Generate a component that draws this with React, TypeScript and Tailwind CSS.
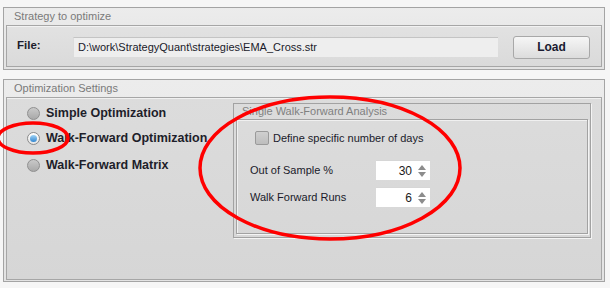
import React from "react";

function Radio({ checked }: { checked?: boolean }) {
  if (checked) {
    return (
      <div className="w-[13px] h-[13px] rounded-full border border-[#8a8a8a] bg-gradient-to-b from-[#ffffff] to-[#e4e4e4] flex items-center justify-center shrink-0">
        <div className="w-[7px] h-[7px] rounded-full bg-gradient-to-b from-[#9fd3f5] to-[#2f86cf]" />
      </div>
    );
  }
  return (
    <div className="w-[13px] h-[13px] rounded-full border border-[#8f8f8f] bg-gradient-to-b from-[#c9c9c9] to-[#a9a9a9] shrink-0" />
  );
}

function Spin({ value }: { value: string }) {
  return (
    <div className="w-[54px] h-[20px] bg-white border-t border-[#d6d6d6] flex items-center">
      <div className="flex-1 text-right pr-[4px] text-[12px] text-[#1a1a1a] leading-none">{value}</div>
      <svg width="12" height="14" viewBox="0 0 12 14" className="mr-[2px]">
        <path d="M6 1 L10 6 L2 6 Z" fill="#8c8c8c" />
        <path d="M2 8 L10 8 L6 13 Z" fill="#8c8c8c" />
      </svg>
    </div>
  );
}

export default function App() {
  return (
    <div className="relative w-[610px] h-[288px] overflow-hidden bg-[#f6f6f6] pt-[7px] pl-[3px] font-['Liberation_Sans',Arial,sans-serif]">
      {/* Panel 1 */}
      <div className="w-[602px] h-[63px] border border-[#a4a4a4] bg-gradient-to-b from-[#ececec] to-[#e3e3e3] flex flex-col px-[2px] pb-[2px]">
        <div className="h-[17px] pl-[8px] text-[11px] leading-[17px] text-[#7a7a7a]">Strategy to optimize</div>
        <div className="h-[42px] border border-[#a6a6a6] shadow-[inset_0_1px_0_#f2f2f2] bg-gradient-to-b from-[#e2e2e2] to-[#dadada] flex items-center">
          <div className="w-[66px] pl-[10px] text-[11.5px] font-bold text-[#1c1c2c]">File:</div>
          <div className="w-[425px] h-[20px] bg-[#eeeeee] border-t border-[#c4c4c4] border-l border-l-[#dcdcdc] flex items-center pl-[4px] text-[11px] text-[#1a1a2a] mt-[1px]">
            D:\work\StrategyQuant\strategies\EMA_Cross.str
          </div>
          <div className="ml-[15px] w-[77px] h-[23px] rounded-[3px] border border-[#a8a8a8] bg-gradient-to-b from-[#f6f6f6] to-[#dcdcdc] flex items-center justify-center text-[12px] font-bold text-[#1a1a30] mt-[2px]">
            Load
          </div>
        </div>
      </div>

      {/* Panel 2 */}
      <div className="mt-[9px] w-[602px] h-[203px] border border-[#a4a4a4] bg-gradient-to-b from-[#ececec] to-[#e3e3e3] flex flex-col px-[2px] pb-[1px]">
        <div className="h-[17px] pl-[8px] text-[11px] leading-[17px] text-[#7a7a7a]">Optimization Settings</div>
        <div className="h-[183px] border border-[#a6a6a6] shadow-[inset_0_1px_0_#f0f0f0] bg-gradient-to-b from-[#dcdcdc] to-[#d6d6d6] flex">
          {/* radios */}
          <div className="w-[226px] pl-[20px] pt-[9px] flex flex-col">
            <div className="h-[13px] flex items-center gap-[6px]">
              <Radio />
              <span className="text-[12.5px] font-bold text-[#1e1e2a] whitespace-nowrap">Simple Optimization</span>
            </div>
            <div className="mt-[12px] h-[13px] flex items-center gap-[6px]">
              <Radio checked />
              <span className="text-[12.5px] font-bold text-[#1e1e2a] whitespace-nowrap">Walk-Forward Optimization</span>
            </div>
            <div className="mt-[14px] h-[13px] flex items-center gap-[6px]">
              <Radio />
              <span className="text-[12.5px] font-bold text-[#1e1e2a] whitespace-nowrap">Walk-Forward Matrix</span>
            </div>
          </div>
          {/* group box */}
          <div className="mt-[5px] w-[358px] h-[135px] border border-[#a2a2a2] shadow-[1px_1px_0_#f4f4f4] flex flex-col px-[2px] pb-[3px]">
            <div className="h-[15px] pl-[6px] text-[11px] leading-[15px] text-[#808080]">Single Walk-Forward Analysis</div>
            <div className="flex-1 border border-[#a2a2a2] shadow-[1px_1px_0_#f4f4f4,inset_1px_1px_0_#f0f0f0] flex flex-col pl-[13px]">
              <div className="mt-[11px] ml-[5px] h-[14px] flex items-center gap-[4px]">
                <div className="w-[14px] h-[14px] rounded-[2px] border border-[#9a9a9a] bg-gradient-to-b from-[#cfcfcf] to-[#bdbdbd]" />
                <span className="text-[11px] text-[#1a1a2a] whitespace-nowrap">Define specific number of days</span>
              </div>
              <div className="mt-[15px] h-[20px] flex items-center">
                <span className="w-[126px] text-[11px] text-[#1a1a2a] whitespace-nowrap">Out of Sample %</span>
                <Spin value="30" />
              </div>
              <div className="mt-[7px] h-[20px] flex items-center">
                <span className="w-[126px] text-[11px] text-[#1a1a2a] whitespace-nowrap">Walk Forward Runs</span>
                <Spin value="6" />
              </div>
            </div>
          </div>
        </div>
      </div>

      {/* red annotations */}
      <svg className="absolute left-0 top-0 pointer-events-none" width="610" height="288" viewBox="0 0 610 288">
        <ellipse cx="33" cy="138" rx="35" ry="15" fill="none" stroke="#ff0000" strokeWidth="3.5" />
        <ellipse cx="330" cy="168" rx="130" ry="71" fill="none" stroke="#ff0000" strokeWidth="3.5" />
      </svg>
    </div>
  );
}
